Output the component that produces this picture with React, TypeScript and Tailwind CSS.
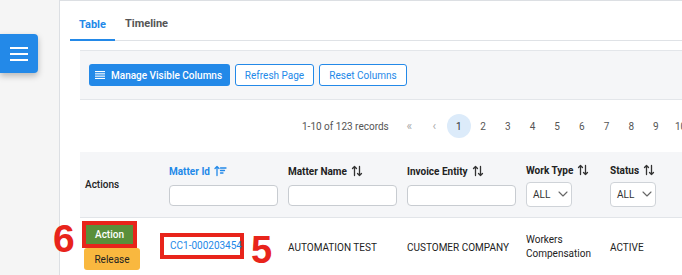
import React from "react";

const SortBoth = () => (
  <svg width="12" height="12" viewBox="0 0 12 12" fill="none" stroke="#333" strokeWidth="1.3" strokeLinecap="round" strokeLinejoin="round">
    <path d="M3.5 10.5V1.5M1.5 3.5L3.5 1.5L5.5 3.5" />
    <path d="M8.5 1.5V10.5M6.5 8.5L8.5 10.5L10.5 8.5" />
  </svg>
);

const SortAsc = () => (
  <svg width="13" height="12" viewBox="0 0 13 12" fill="none" stroke="#2389e8" strokeWidth="1.3" strokeLinecap="round" strokeLinejoin="round">
    <path d="M3 10.5V1.5M1 3.5L3 1.5L5 3.5" />
    <path d="M6.5 3H12M6.5 5.5H10.5M6.5 8H9" />
  </svg>
);

const Chevron = () => (
  <svg width="10" height="6" viewBox="0 0 10 6" fill="none" stroke="#666" strokeWidth="1.1" strokeLinecap="round" strokeLinejoin="round">
    <path d="M1 1L5 5L9 1" />
  </svg>
);

const Select = () => (
  <div className="flex h-[25px] w-[46px] items-center gap-[8px] rounded-[4px] border border-[#cfd3d8] bg-white pl-[6px] text-[10px] text-[#333]">
    <span>ALL</span>
    <Chevron />
  </div>
);

const TextInput = () => (
  <div className="h-[21px] w-[109px] rounded-[4px] border border-[#c8ccd1] bg-white" />
);

export default function App() {
  const pages = ["2", "3", "4", "5", "6", "7", "8", "9", "10"];
  return (
    <div className="flex h-[275px] w-[682px] overflow-hidden whitespace-nowrap bg-white" style={{ fontFamily: "Roboto, 'Liberation Sans', sans-serif" }}>
      {/* sidebar */}
      <div className="relative w-[60px] shrink-0 border-r border-[#dcdfe3] bg-[#f5f5f5]">
        <div className="mt-[34px] flex h-[39px] w-[38px] flex-col items-center justify-center gap-[4px] rounded-r-[4px] bg-[#2389e8] shadow-[0_3px_6px_rgba(0,0,0,0.25)]">
          <div className="h-[2px] w-[18px] bg-white" />
          <div className="h-[2px] w-[18px] bg-white" />
          <div className="h-[2px] w-[18px] bg-white" />
        </div>
      </div>

      {/* main */}
      <div className="relative min-w-0 flex-1 border-t border-[#dcdfe3] pl-[10px]">
        {/* tabs */}
        <div className="flex h-[40px] items-end border-b border-[#dfe2e6]">
          <div className="-mb-[1px] flex h-[34px] items-center border-b-2 border-[#2389e8] px-[9px] pt-[4px] text-[11px] font-bold text-[#2389e8]">Table</div>
          <div className="flex h-[34px] items-center px-[10px] pt-[3px] text-[11px] font-bold text-[#555]">Timeline</div>
        </div>

        <div className="pl-[10px]">
          {/* toolbar */}
          <div className="mt-[9px] flex h-[50px] items-center gap-[5px] border-y border-[#e3e6ea] bg-[#f5f6f8] pl-[9px]">
            <button className="flex h-[22px] w-[141px] items-center gap-[6px] rounded-[3px] bg-[#2389e8] pl-[6px] text-[10px] font-medium text-white">
              <svg width="10" height="8" viewBox="0 0 10 8" fill="white">
                <rect x="0" y="0" width="10" height="1.1" />
                <rect x="0" y="2.3" width="10" height="1.1" />
                <rect x="0" y="4.6" width="10" height="1.1" />
                <rect x="0" y="6.9" width="10" height="1.1" />
              </svg>
              Manage Visible Columns
            </button>
            <button className="h-[22px] w-[79px] rounded-[3px] border border-[#2389e8] bg-white text-[10px] text-[#2389e8]">Refresh Page</button>
            <button className="h-[22px] w-[88px] rounded-[3px] border border-[#2389e8] bg-white text-[10px] text-[#2389e8]">Reset Columns</button>
          </div>

          {/* pagination */}
          <div className="flex h-[52px] items-center pl-[222px] text-[10px] text-[#555]">
            <span className="mr-[8px] shrink-0">1-10 of 123 records</span>
            <span className="w-[25px] shrink-0 text-center text-[12px] text-[#aaa]">«</span>
            <span className="w-[25px] shrink-0 text-center text-[12px] text-[#aaa]">‹</span>
            <span className="flex h-[24px] w-[24px] shrink-0 items-center justify-center rounded-full bg-[#dcebfa] text-[#333]">1</span>
            {pages.map((p) => (
              <span key={p} className="w-[24.7px] shrink-0 text-center text-[#555]">{p}</span>
            ))}
          </div>

          {/* table */}
          <div className="text-[10px] text-[#222]">
            <div className="flex h-[66px] border-b border-[#e2e5e9] bg-[#f5f6f8]">
              <div className="flex w-[84px] shrink-0 items-center pl-[5px] font-medium">Actions</div>
              <div className="flex w-[119px] shrink-0 flex-col justify-center gap-[6px] pl-[5px]">
                <div className="flex items-center gap-[4px] font-bold text-[#2389e8]">Matter Id <SortAsc /></div>
                <TextInput />
              </div>
              <div className="flex w-[119px] shrink-0 flex-col justify-center gap-[6px] pl-[5px]">
                <div className="flex items-center gap-[4px] font-bold">Matter Name <SortBoth /></div>
                <TextInput />
              </div>
              <div className="flex w-[119px] shrink-0 flex-col justify-center gap-[6px] pl-[5px]">
                <div className="flex items-center gap-[4px] font-bold">Invoice Entity <SortBoth /></div>
                <TextInput />
              </div>
              <div className="flex w-[84px] shrink-0 flex-col justify-center gap-[4px] pl-[5px]">
                <div className="flex items-center gap-[4px] font-bold">Work Type <SortBoth /></div>
                <Select />
              </div>
              <div className="flex w-[84px] shrink-0 flex-col justify-center gap-[4px] pl-[5px]">
                <div className="flex items-center gap-[4px] font-bold">Status <SortBoth /></div>
                <Select />
              </div>
            </div>

            <div className="flex h-[58px]">
              <div className="relative flex w-[84px] shrink-0 flex-col items-start pl-[2px] pt-[3px]">
                <span className="absolute left-[-27px] top-[1px] text-[39px] font-bold leading-none text-[#e8241b]" style={{ fontFamily: "'Liberation Sans', Arial, sans-serif" }}>6</span>
                <div className="border-[4px] border-[#e8241b]">
                  <div className="flex h-[19px] w-[47px] items-center justify-center bg-[#5a8f3a] text-[10px] font-medium text-white">Action</div>
                </div>
                <div className="ml-[2px] flex h-[22px] w-[56px] items-center justify-center rounded-[3px] bg-[#f9b83f] text-[10px] text-[#222]">Release</div>
              </div>
              <div className="relative flex w-[119px] shrink-0 items-center">
                <div className="-ml-[4px] -mt-[3px] flex h-[26px] w-[84px] items-center border-[4px] border-[#e8241b] pl-[6px] text-[#2389e8]">CC1-000203454</div>
                <span className="absolute left-[87px] top-[13px] text-[38px] font-bold leading-none text-[#e8241b]" style={{ fontFamily: "'Liberation Sans', Arial, sans-serif" }}>5</span>
              </div>
              <div className="flex w-[119px] shrink-0 items-center pl-[5px]">AUTOMATION TEST</div>
              <div className="flex w-[119px] shrink-0 items-center pl-[5px]">CUSTOMER COMPANY</div>
              <div className="flex w-[84px] shrink-0 flex-col justify-center pl-[5px] leading-[14px]">
                <span>Workers</span>
                <span>Compensation</span>
              </div>
              <div className="flex w-[84px] shrink-0 items-center pl-[5px]">ACTIVE</div>
            </div>
          </div>
        </div>
      </div>
    </div>
  );
}
